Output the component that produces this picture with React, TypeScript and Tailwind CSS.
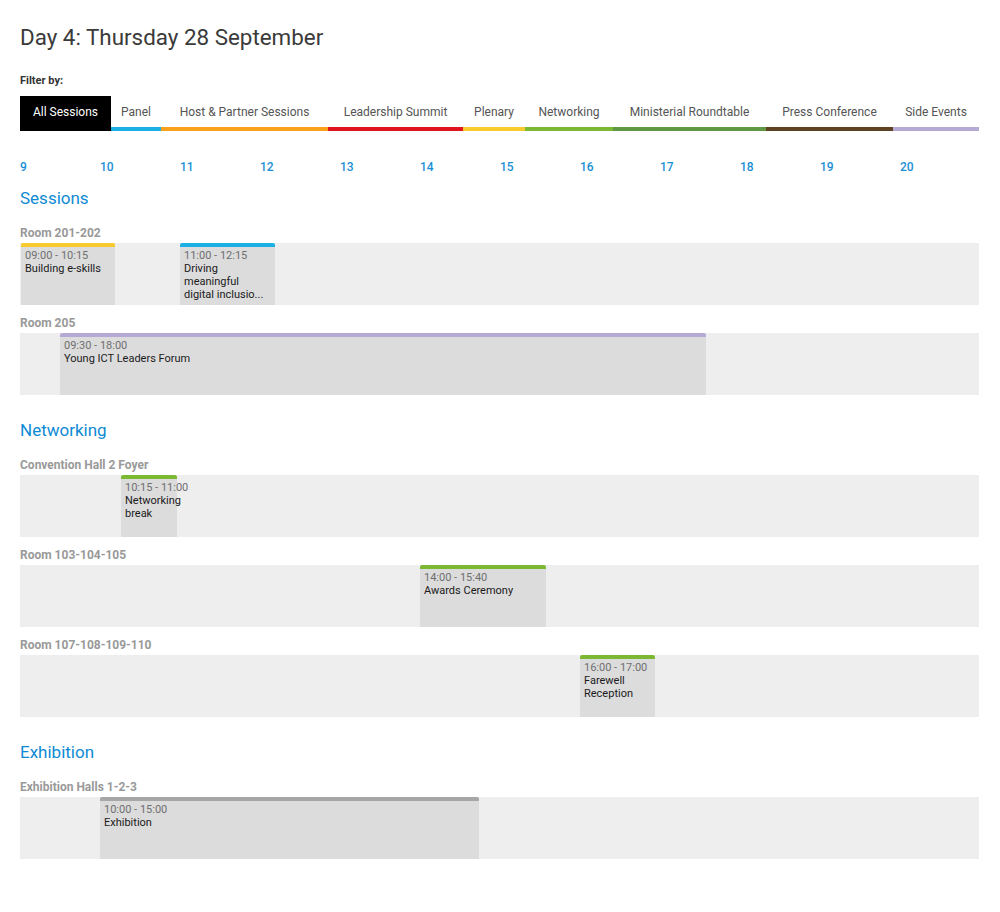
import React from "react";

type Tab = { label: string; w: string; bar: string; active?: boolean };

const tabs: Tab[] = [
  { label: "All Sessions", w: "w-[91px]", bar: "border-black", active: true },
  { label: "Panel", w: "w-[50px]", bar: "border-[#1ab0e6]" },
  { label: "Host & Partner Sessions", w: "w-[167px]", bar: "border-[#f9a11b]" },
  { label: "Leadership Summit", w: "w-[135px]", bar: "border-[#e0141e]" },
  { label: "Plenary", w: "w-[62px]", bar: "border-[#f8cb2e]" },
  { label: "Networking", w: "w-[88px]", bar: "border-[#7cb932]" },
  { label: "Ministerial Roundtable", w: "w-[153px]", bar: "border-[#5e9845]" },
  { label: "Press Conference", w: "w-[127px]", bar: "border-[#5d4322]" },
  { label: "Side Events", w: "w-[86px]", bar: "border-[#b6a9d6]" },
];

type Ev = { left: number; width: number; time: string; title: string; bar: string };
type Room = { name: string; events: Ev[] };
type Section = { title: string; rooms: Room[] };

const sections: Section[] = [
  {
    title: "Sessions",
    rooms: [
      {
        name: "Room 201-202",
        events: [
          { left: 1, width: 94, time: "09:00 - 10:15", title: "Building e-skills", bar: "border-[#f8cb2e]" },
          {
            left: 160,
            width: 95,
            time: "11:00 - 12:15",
            title: "Driving meaningful digital inclusio...",
            bar: "border-[#1ab0e6]",
          },
        ],
      },
      {
        name: "Room 205",
        events: [
          { left: 40, width: 646, time: "09:30 - 18:00", title: "Young ICT Leaders Forum", bar: "border-[#b6a9d6]" },
        ],
      },
    ],
  },
  {
    title: "Networking",
    rooms: [
      {
        name: "Convention Hall 2 Foyer",
        events: [
          { left: 101, width: 56, time: "10:15 - 11:00", title: "Networking break", bar: "border-[#7cb932]" },
        ],
      },
      {
        name: "Room 103-104-105",
        events: [
          { left: 400, width: 126, time: "14:00 - 15:40", title: "Awards Ceremony", bar: "border-[#7cb932]" },
        ],
      },
      {
        name: "Room 107-108-109-110",
        events: [
          { left: 560, width: 75, time: "16:00 - 17:00", title: "Farewell Reception", bar: "border-[#7cb932]" },
        ],
      },
    ],
  },
  {
    title: "Exhibition",
    rooms: [
      {
        name: "Exhibition Halls 1-2-3",
        events: [
          { left: 80, width: 379, time: "10:00 - 15:00", title: "Exhibition", bar: "border-[#a6a6a6]" },
        ],
      },
    ],
  },
];

const hours = [9, 10, 11, 12, 13, 14, 15, 16, 17, 18, 19, 20];

function EventBox({ ev }: { ev: Ev }) {
  return (
    <div
      className={`absolute top-0 h-full bg-[#dcdcdc] border-t-4 ${ev.bar} rounded-t-[2px] pl-[4px] pr-[6px] pt-[2px] text-[11px] leading-[13px]`}
      style={{ left: ev.left, width: ev.width }}
    >
      <div className="text-[#6f6f6f] whitespace-nowrap">{ev.time}</div>
      <div className="text-[#1a1a1a]">{ev.title}</div>
    </div>
  );
}

export default function App() {
  return (
    <div className="min-h-[912px] bg-white font-['Roboto','Liberation_Sans',sans-serif] px-[20px] pt-[23px] pb-10 w-[1000px]">
      <h1 className="text-[22.4px] leading-[28px] text-[#3a3a3a] font-normal">Day 4: Thursday 28 September</h1>

      <div className="mt-[22px] text-[11px] leading-[16px] font-bold text-[#333333]">Filter by:</div>

      <div className="mt-[7px] flex w-[959px]">
        {tabs.map((t) => (
          <div
            key={t.label}
            className={`${t.w} h-[35px] shrink-0 flex items-center justify-center border-b-4 ${t.bar} text-[12px] ${
              t.active ? "bg-black text-white" : "text-[#555555]"
            }`}
          >
            {t.label}
          </div>
        ))}
      </div>

      <div className="mt-[28px] flex w-[959px] h-[16px] text-[12px] leading-[16px] font-medium text-[#1a8fd4]">
        {hours.map((h) => (
          <div key={h} className="w-[80px] shrink-0">
            {h}
          </div>
        ))}
      </div>

      {sections.map((s, si) => (
        <div key={s.title} className={si === 0 ? "mt-[11px]" : "mt-[23px]"}>
          <h2 className="text-[17px] leading-[24px] text-[#0e8ad4] font-normal">{s.title}</h2>
          {s.rooms.map((r, ri) => (
            <div key={r.name} className={ri === 0 ? "mt-[15px]" : "mt-[10px]"}>
              <div className="text-[12px] leading-[16px] font-bold text-[#999999]">{r.name}</div>
              <div className="relative mt-[2px] h-[62px] w-[959px] bg-[#eeeeee]">
                {r.events.map((ev) => (
                  <EventBox key={ev.time} ev={ev} />
                ))}
              </div>
            </div>
          ))}
        </div>
      ))}
    </div>
  );
}
